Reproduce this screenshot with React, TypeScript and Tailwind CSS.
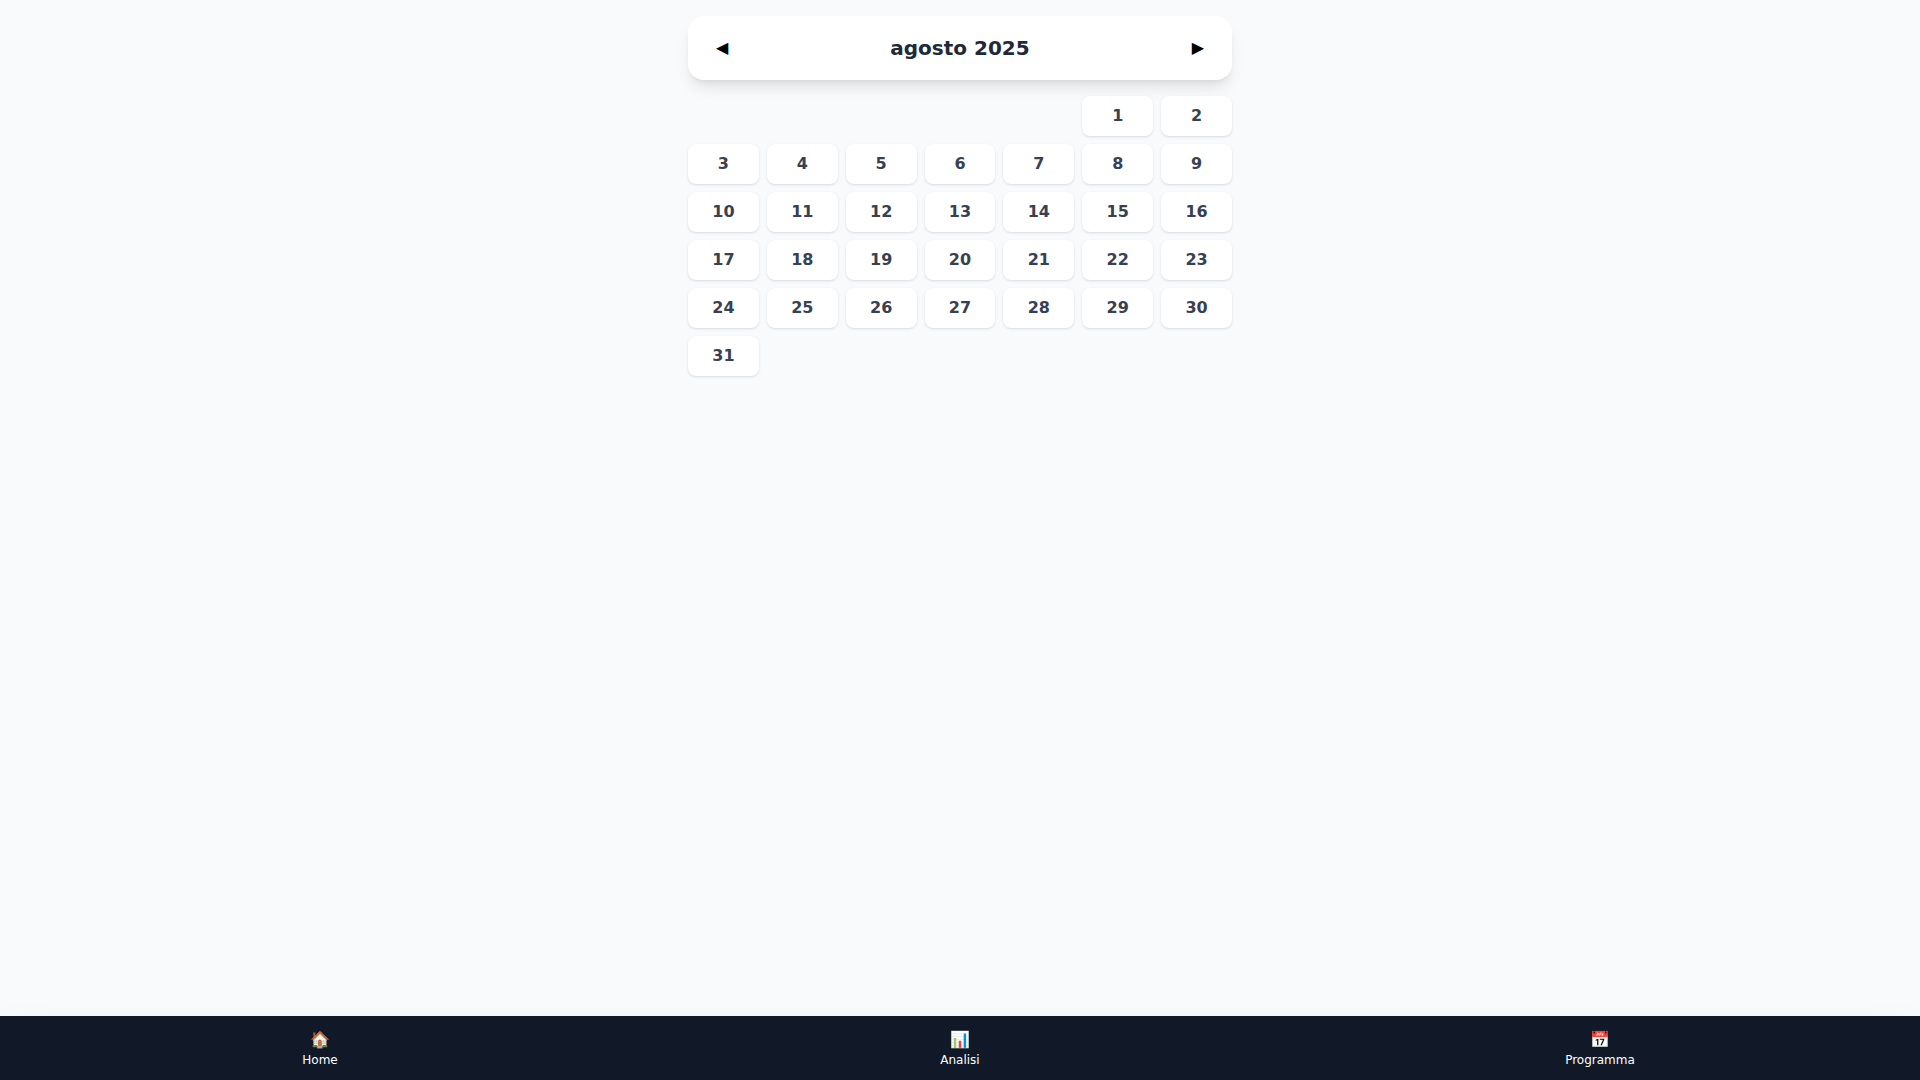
const days = Array.from({ length: 31 }, (_, i) => i + 1);

const tabs = [
  { icon: "🏠", label: "Home" },
  { icon: "📊", label: "Analisi" },
  { icon: "📅", label: "Programma" },
];

export default function App() {
  return (
    <div className="flex min-h-screen flex-col bg-[#f9fafb] font-['DejaVu_Sans',sans-serif]">
      <main className="mx-auto w-full max-w-xl flex-1 p-4">
        <header className="mb-4 flex items-center justify-between rounded-2xl bg-white p-4 shadow-lg">
          <button type="button" aria-label="Mese precedente" className="rounded-lg px-3 py-1 text-black">◀</button>
          <h1 className="text-xl font-bold text-[#1f2937]">agosto 2025</h1>
          <button type="button" aria-label="Mese successivo" className="rounded-lg px-3 py-1 text-black">▶</button>
        </header>
        <div className="grid grid-cols-7 gap-2">
          {days.map((day) => (
            <button
              key={day}
              type="button"
              className="rounded-lg bg-white py-2 text-center font-bold text-[#374151] shadow-sm first:col-start-6"
            >
              {day}
            </button>
          ))}
        </div>
      </main>
      <nav className="sticky bottom-0 grid h-16 grid-cols-3 bg-[#111827] text-white shadow-2xl">
        {tabs.map((tab) => (
          <button key={tab.label} type="button" className="flex flex-col items-center justify-center text-xs">
            <span className="text-base">{tab.icon}</span>
            <span>{tab.label}</span>
          </button>
        ))}
      </nav>
    </div>
  );
}
